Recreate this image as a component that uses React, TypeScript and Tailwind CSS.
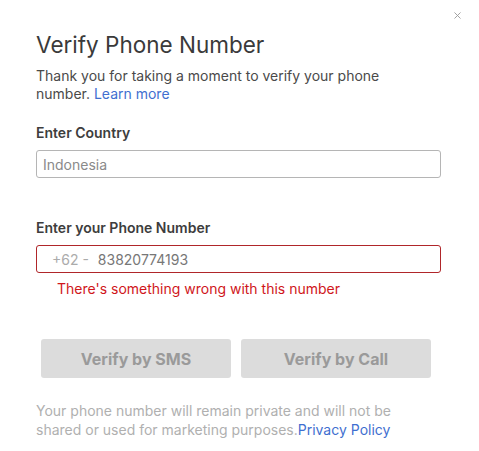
import { X } from "lucide-react";

const font = { fontFamily: 'Inter, "Liberation Sans", Arial, sans-serif' };

export default function App() {
  return (
    <div
      className="relative h-[451px] w-[479px] bg-white pl-[36px] pt-[30px]"
      style={font}
    >
      <button className="absolute right-[16px] top-[10px] text-[#9a9a9a]">
        <X size={11} strokeWidth={2} />
      </button>

      <h1 className="text-[22.5px] leading-[30px] text-[#3a3a3a]">
        Verify Phone Number
      </h1>

      <p className="mt-[7px] w-[396px] text-[14px] leading-[18px] text-[#4a4a4a]">
        Thank you for taking a moment to verify your phone number.{" "}
        <a className="text-[#3f6fd0]">Learn more</a>
      </p>

      <label className="mt-[21px] block text-[14px] font-semibold leading-[18px] text-[#3d3d3d]">
        Enter Country
      </label>
      <div className="mt-[8px] flex h-[28px] w-[405px] items-center rounded-[3px] border border-[#b5b5b5] px-[6px] text-[14px] text-[#8a8a8a]">
        Indonesia
      </div>

      <label className="mt-[41px] block text-[14px] font-semibold leading-[18px] text-[#3d3d3d]">
        Enter your Phone Number
      </label>
      <div className="mt-[8px] flex h-[28px] w-[405px] items-center rounded-[3px] border border-[#b0262a] text-[14px]">
        <span className="ml-[15px] text-[#ababab]">+62 -</span>
        <span className="ml-[9px] text-[#777777]">83820774193</span>
      </div>
      <p className="mt-[7px] pl-[21px] text-[14px] leading-[18px] text-[#d0161b]">
        There's something wrong with this number
      </p>

      <div className="ml-[5px] mt-[41px] flex gap-[10px]">
        <button className="h-[39px] w-[190px] rounded-[3px] bg-[#dcdcdc] text-[16px] font-bold text-[#9a9a9a]">
          Verify by SMS
        </button>
        <button className="h-[39px] w-[190px] rounded-[3px] bg-[#dcdcdc] text-[16px] font-bold text-[#9a9a9a]">
          Verify by Call
        </button>
      </div>

      <p className="mt-[23px] w-[396px] text-[14px] leading-[19px] text-[#b0b0b0]">
        Your phone number will remain private and will not be shared or used
        for marketing purposes.<a className="text-[#3f6fd0]">Privacy Policy</a>
      </p>
    </div>
  );
}
